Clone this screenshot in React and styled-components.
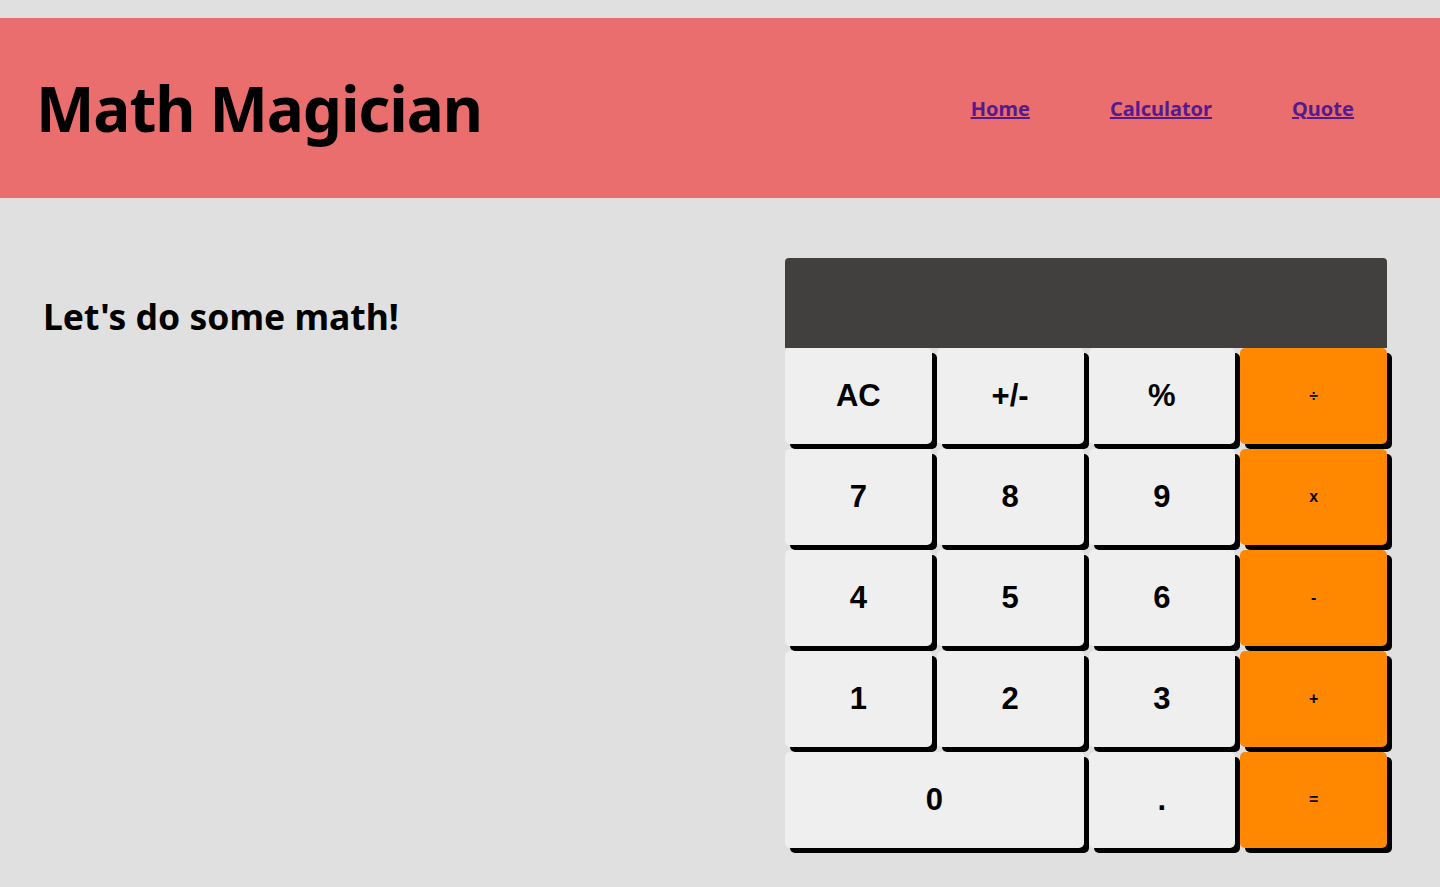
import styled, { createGlobalStyle } from "styled-components";

const GlobalStyle = createGlobalStyle`
  body {
    margin: 0;
    padding-top: 18px;
    background: #e0e0e0;
    font-family: "Noto Sans", "Open Sans", sans-serif;
  }
`;

const Header = styled.header`
  height: 180px;
  background: #eb6e6e;
  display: flex;
  align-items: center;
  justify-content: space-between;
  padding: 0 86px 0 36px;
`;

const Logo = styled.h1`
  margin: 0;
  font-size: 62px;
  font-weight: 700;
  letter-spacing: -1.1px;
  color: #000;
`;

const Nav = styled.nav`
  display: flex;
  gap: 80px;
  font-size: 20px;
  font-weight: 700;

  a {
    color: #551a8b;
    text-decoration: underline;
  }
`;

const Main = styled.main`
  display: flex;
  justify-content: space-between;
  align-items: flex-start;
  padding: 60px 53px 40px 43px;
`;

const Intro = styled.h2`
  margin: 36px 0 0;
  font-size: 35.5px;
  line-height: 44px;
  font-weight: 700;
`;

const Calc = styled.div`
  width: 602px;
`;

const Display = styled.div`
  height: 90px;
  background: #42403e;
  border-radius: 4px 4px 0 0;
`;

const Keys = styled.div`
  display: grid;
  grid-template-columns: repeat(4, 1fr);
  grid-auto-rows: 96px;
  column-gap: 5px;
  row-gap: 5px;
`;

const Key = styled.button`
  grid-column: span ${(p) => p.$span || 1};
  border: none;
  border-radius: 5px;
  box-shadow: 5px 5px 0 #000;
  background: ${(p) => (p.$op ? "#ff8800" : "#efefef")};
  font-family: "Liberation Sans", Arial, sans-serif;
  font-weight: 700;
  font-size: ${(p) => (p.$op ? "16px" : "31px")};
  color: #000;
  padding: 0;
  cursor: pointer;
`;

const keys = [
  ["AC"], ["+/-"], ["%"], ["÷", true],
  ["7"], ["8"], ["9"], ["x", true],
  ["4"], ["5"], ["6"], ["-", true],
  ["1"], ["2"], ["3"], ["+", true],
  ["0", false, 2], ["."], ["=", true],
];

export default function App() {
  return (
    <>
      <GlobalStyle />
      <Header>
        <Logo>Math Magician</Logo>
        <Nav>
          <a href="#home">Home</a>
          <a href="#calculator">Calculator</a>
          <a href="#quote">Quote</a>
        </Nav>
      </Header>
      <Main>
        <Intro>Let's do some math!</Intro>
        <Calc>
          <Display />
          <Keys>
            {keys.map(([label, op, span]) => (
              <Key key={label} $op={op} $span={span}>
                {label}
              </Key>
            ))}
          </Keys>
        </Calc>
      </Main>
    </>
  );
}
